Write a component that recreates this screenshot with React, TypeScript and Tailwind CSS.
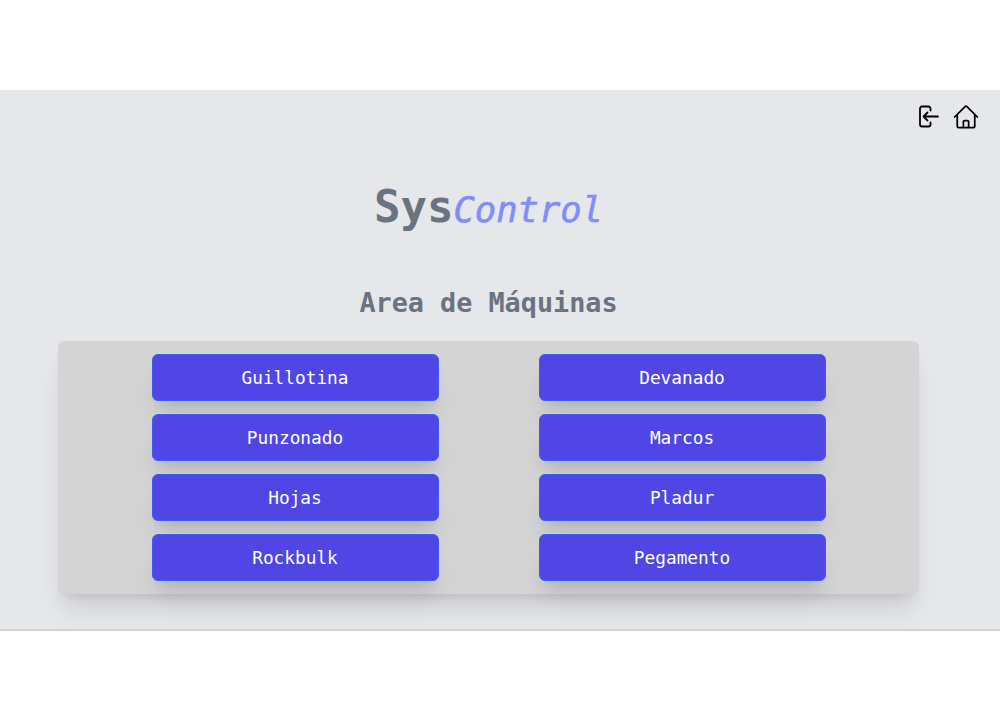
import { HiOutlineHome } from "react-icons/hi2";

const machines = [
  "Guillotina",
  "Devanado",
  "Punzonado",
  "Marcos",
  "Hojas",
  "Pladur",
  "Rockbulk",
  "Pegamento",
];

export default function App() {
  return (
    <div className="min-h-[720px] bg-white pt-[90px] font-['DejaVu_Sans_Mono',monospace]">
      <main className="h-[541px] border-b-2 border-[#d1d1d4] bg-[#e5e7eb]">
        <div className="flex items-center justify-end gap-[11px] pt-[13px] pr-[20px] text-black">
          <svg viewBox="0 0 24 24" fill="none" stroke="currentColor" strokeWidth="1.8" strokeLinecap="round" strokeLinejoin="round" className="h-[24px] w-[24px]">
            <path d="M13.5 5.5V3.5a2 2 0 0 0-2-2H5a2 2 0 0 0-2 2v16a2 2 0 0 0 2 2h6.5a2 2 0 0 0 2-2v-2" />
            <path d="M21 11.5H6.5m0 0l4-4m-4 4l4 4" />
          </svg>
          <HiOutlineHome className="h-[28px] w-[28px]" />
        </div>
        <h1 className="mt-[46px] flex items-baseline justify-center pr-[23px] font-bold">
          <span className="text-[44px] leading-[60px] text-[#6b7280]">Sys</span>
          <span className="text-[35.5px] leading-[60px] font-normal text-[#818cf8] italic [-webkit-text-stroke:0.6px_#818cf8]">Control</span>
        </h1>
        <h2 className="mt-[45px] pr-[23px] text-center text-[26.8px] leading-[36px] font-bold text-[#6b7280]">
          Area de Máquinas
        </h2>
        <div className="mt-[20px] mr-[81px] ml-[58px] grid grid-cols-[287px_287px] justify-center gap-x-[100px] gap-y-[13px] rounded-md bg-[#d4d4d4] py-[13px] shadow-xl">
          {machines.map((name) => (
            <button
              key={name}
              type="button"
              className="h-[47px] rounded-md border border-[#3f5cf0] bg-[#4f46e5] pt-[2px] text-[17.8px] text-white shadow-xl"
            >
              {name}
            </button>
          ))}
        </div>
      </main>
    </div>
  );
}
